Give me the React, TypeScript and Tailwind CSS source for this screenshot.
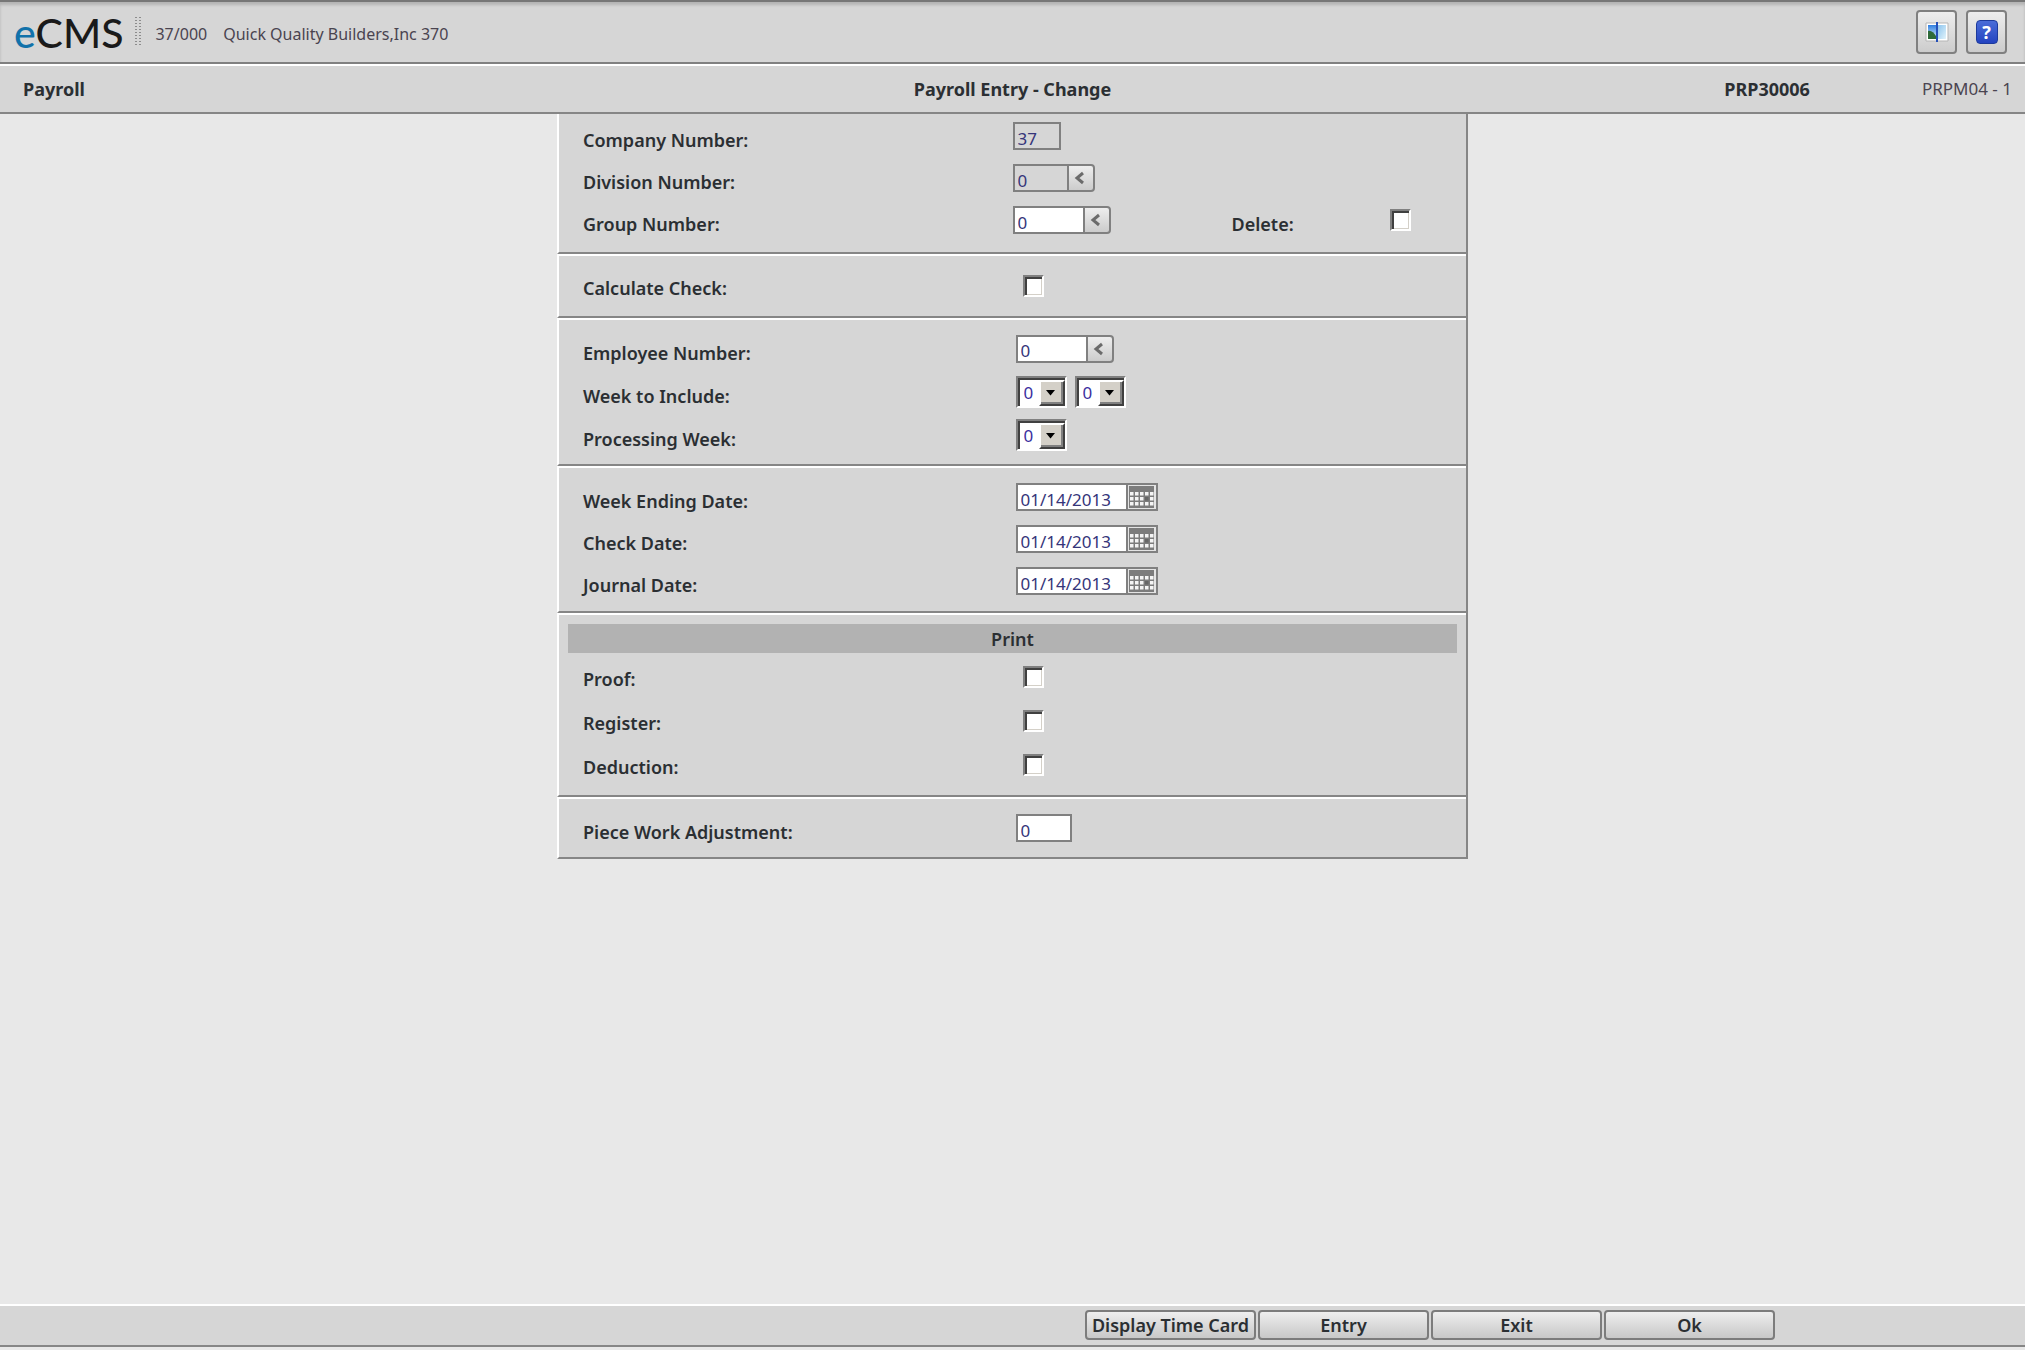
import type { InputHTMLAttributes, ReactNode } from "react";

type rowProps = {
    label: string;
    htmlFor: string;
    className?: string;
    labelClass?: string;
    children: ReactNode;
}

type fieldProps = InputHTMLAttributes<HTMLInputElement> & {
    id: string;
}

const sunken = "border-2 border-t-[#808080] border-l-[#808080] border-r-white border-b-white";

const Section = ({ className = "", children }: { className?: string, children: ReactNode }) => {
    return (
        <section className={`border-t-2 border-b-2 border-l-2 border-t-white border-b-[#868686] border-l-white ${className}`}>
            {children}
        </section>
    )
}

const Row = ({ label, htmlFor, className = "h-[42px]", labelClass = "pt-2", children }: rowProps) => {
    return (
        <div className={`grid grid-cols-2 items-center ${className}`}>
            <label htmlFor={htmlFor} className={`pl-6 font-semibold ${labelClass}`}>{label}</label>
            <div className="flex items-center">{children}</div>
        </div>
    )
}

const Field = ({ className = "", ...rest }: fieldProps) => {
    return (
        <input
            type="text"
            className={`h-7 border-2 border-[#808080] px-[3px] pt-1 text-[17px] text-[#35357a] outline-none ${className}`}
            {...rest}
        />
    )
}

const LookupButton = ({ label }: { label: string }) => {
    return (
        <button
            type="button"
            aria-label={label}
            className="-ml-[2px] flex h-7 w-7 items-center justify-center rounded-r border-2 border-[#808080] bg-linear-to-b from-[#eeeeee] to-[#cccccc] pr-[3px]"
        >
            <svg width="10" height="14" viewBox="0 0 10 14" fill="none" stroke="#6b6b6b" strokeWidth="3">
                <path d="M9 2 3 7l6 5" />
            </svg>
        </button>
    )
}

const CheckBox = ({ id, className = "ml-[10px]" }: { id: string, className?: string }) => {
    return (
        <input
            id={id}
            type="checkbox"
            className={`h-[22px] w-[21px] appearance-none bg-white shadow-[inset_2px_2px_0_#404040,inset_-1px_-1px_0_#d4d0c8] ${sunken} ${className}`}
        />
    )
}

const WeekSelect = ({ id, label }: { id: string, label?: string }) => {
    return (
        <div className={`relative h-8 w-[51px] bg-white ${sunken}`}>
            <select
                id={id}
                aria-label={label}
                className="h-7 w-[47px] appearance-none border-t-2 border-l-2 border-[#404040] pl-1 text-[17px] leading-6 text-[#3a2fa0] outline-none"
            >
                <option>0</option>
                <option>1</option>
                <option>2</option>
            </select>
            <span className="pointer-events-none absolute top-[2px] right-0 flex h-[26px] w-[26px] items-center justify-center border-2 border-t-white border-l-white border-r-[#404040] border-b-[#404040] bg-[#d4d0c8] pr-[2px] shadow-[inset_-2px_-2px_0_#808080]">
                <svg width="9" height="6" viewBox="0 0 9 6"><path d="M0 0h9L4.500 5.500z" fill="#000" /></svg>
            </span>
        </div>
    )
}

const DateField = ({ id, label }: { id: string, label: string }) => {
    return (
        <>
            <Field id={id} defaultValue="01/14/2013" className="ml-[3px] w-[112px] bg-white" />
            <button
                type="button"
                aria-label={label}
                className="-ml-[2px] flex h-7 w-8 items-center justify-center border-2 border-[#808080] bg-[#e4e4e4]"
            >
                <svg width="25" height="22" viewBox="0 0 25 22">
                    <path d="M0 0h25v22H0z" fill="#7c7c7c" />
                    {[6, 11, 16].map((y) => (
                        [1, 6, 11, 16, 21].map((x) => (
                            <rect key={`${x}-${y}`} x={x} y={y} width="3.500" height="3.500" fill={x === 16 && y === 11 ? "#666" : "#f4f4f4"} />
                        ))
                    ))}
                </svg>
            </button>
        </>
    )
}

const ToolButton = ({ label, children }: { label: string, children: ReactNode }) => {
    return (
        <button
            type="button"
            aria-label={label}
            className="flex h-11 w-[41px] items-center justify-center rounded border-2 border-[#808080] bg-linear-to-b from-[#eeeeee] to-[#cccccc]"
        >
            {children}
        </button>
    )
}

const FooterButton = ({ children }: { children: ReactNode }) => {
    return (
        <button
            type="button"
            className="h-[30px] w-[171px] rounded border-2 border-[#7c7c7c] bg-linear-to-b from-[#eeeeee] to-[#c8c8c8] font-semibold whitespace-nowrap"
        >
            {children}
        </button>
    )
}

const App = () => {

    return (
        <div className="flex min-h-screen flex-col bg-[#e8e8e8] font-['Noto_Sans',sans-serif] text-[18px] leading-6 text-[#2b2f33]">
            <header className="flex h-16 items-center border-t-2 border-b-2 border-t-[#777777] border-b-[#808080] bg-[#d6d6d6] pr-[18px] pl-[14px] shadow-[inset_0_3px_3px_#b4b4b4]">
                <span className="font-['Lato',sans-serif] text-[41px] leading-none font-medium text-[#1a1a1a]"><span className="text-[#1272aa]">e</span>CMS</span>
                <svg className="ml-3" width="6" height="30" viewBox="0 0 6 30" stroke="#8c8c8c" strokeWidth="2" strokeDasharray="1 2">
                    <path d="M1 0v30M5 0v30" />
                </svg>
                <div className="ml-[14px] flex gap-4 pt-1 text-[16px] text-[#4a4450]">
                    <span>37/000</span>
                    <span>Quick Quality Builders,Inc 370</span>
                </div>
                <div className="ml-auto flex gap-[9px]">
                    <ToolButton label="Switch view">
                        <svg width="24" height="22" viewBox="0 0 24 22">
                            <defs>
                                <linearGradient id="sky" x1="0" y1="0" x2="0" y2="1">
                                    <stop offset="0" stopColor="#2f7fe0" />
                                    <stop offset="1" stopColor="#e4f4ff" />
                                </linearGradient>
                                <linearGradient id="haze" x1="0" y1="0" x2="1" y2="1">
                                    <stop offset="0" stopColor="#8cc4ee" />
                                    <stop offset="1" stopColor="#e2f3fa" />
                                </linearGradient>
                            </defs>
                            <path d="M1 2h22v18H1z" fill="#fff" stroke="#b5b5b5" />
                            <path d="M3 4h8v14H3z" fill="url(#sky)" />
                            <path d="M3 10c3-1 6 2 8 5v3H3z" fill="#2f6b3a" />
                            <path d="M13 4h8v14h-8z" fill="url(#haze)" />
                            <path d="M11 1h2v20h-2z" fill="#2450b8" />
                        </svg>
                    </ToolButton>
                    <ToolButton label="Help">
                        <span className="flex h-6 w-[22px] items-center justify-center rounded border border-[#1d3a9c] bg-linear-to-b from-[#4a6cd8] to-[#2443c0] text-[18px] font-bold text-white">?</span>
                    </ToolButton>
                </div>
            </header>

            <div className="grid h-[50px] grid-cols-3 items-center border-t-2 border-b-2 border-t-white border-b-[#868686] bg-[#d6d6d6] px-[13px] font-bold">
                <h2 className="pl-[10px]">Payroll</h2>
                <h1 className="text-center">Payroll Entry - Change</h1>
                <div className="flex items-center justify-end">
                    <span className="mr-[112px]">PRP30006</span>
                    <span className="text-[17px] font-normal text-[#4a4450]">PRPM04 - 1</span>
                </div>
            </div>

            <main className="flex-1">
                <form className="mx-auto w-full max-w-[911px] border-r-2 border-r-[#868686] bg-[#d6d6d6]">
                    <section className="border-b-2 border-l-2 border-b-[#868686] border-l-white pt-px pb-[11px]">
                        <Row label="Company Number:" htmlFor="company">
                            <Field id="company" defaultValue="37" readOnly className="w-12 bg-[#d6d6d6]" />
                        </Row>
                        <Row label="Division Number:" htmlFor="division">
                            <Field id="division" defaultValue="0" readOnly className="w-14 bg-[#d6d6d6]" />
                            <LookupButton label="Look up division" />
                        </Row>
                        <Row label="Group Number:" htmlFor="group">
                            <Field id="group" defaultValue="0" className="w-[72px] bg-white" />
                            <LookupButton label="Look up group" />
                            <label htmlFor="delete" className="ml-[121px] w-[158px] pt-2 font-semibold">Delete:</label>
                            <CheckBox id="delete" className="" />
                        </Row>
                    </section>

                    <Section>
                        <Row label="Calculate Check:" htmlFor="calculate" className="h-[60px]" labelClass="pt-1">
                            <CheckBox id="calculate" />
                        </Row>
                    </Section>

                    <Section className="pt-[7px] pb-2">
                        <Row label="Employee Number:" htmlFor="employee" className="h-[43px]">
                            <Field id="employee" defaultValue="0" className="ml-[3px] w-[72px] bg-white" />
                            <LookupButton label="Look up employee" />
                        </Row>
                        <Row label="Week to Include:" htmlFor="week-from" className="h-[43px]">
                            <div className="ml-[3px] flex gap-2">
                                <WeekSelect id="week-from" />
                                <WeekSelect id="week-to" label="Second week to include" />
                            </div>
                        </Row>
                        <Row label="Processing Week:" htmlFor="processing" className="h-[43px]">
                            <div className="ml-[3px]">
                                <WeekSelect id="processing" />
                            </div>
                        </Row>
                    </Section>

                    <Section className="pt-2 pb-[9px]">
                        <Row label="Week Ending Date:" htmlFor="week-ending">
                            <DateField id="week-ending" label="Pick week ending date" />
                        </Row>
                        <Row label="Check Date:" htmlFor="check-date">
                            <DateField id="check-date" label="Pick check date" />
                        </Row>
                        <Row label="Journal Date:" htmlFor="journal-date">
                            <DateField id="journal-date" label="Pick journal date" />
                        </Row>
                    </Section>

                    <Section className="pt-[9px] pb-2">
                        <h3 className="mx-[9px] mb-[2px] h-[29px] bg-[#b2b2b2] pt-[3px] text-center font-semibold">Print</h3>
                        <Row label="Proof:" htmlFor="proof" className="h-11" labelClass="pt-1">
                            <CheckBox id="proof" />
                        </Row>
                        <Row label="Register:" htmlFor="register" className="h-11" labelClass="pt-1">
                            <CheckBox id="register" />
                        </Row>
                        <Row label="Deduction:" htmlFor="deduction" className="h-11" labelClass="pt-1">
                            <CheckBox id="deduction" />
                        </Row>
                    </Section>

                    <Section>
                        <Row label="Piece Work Adjustment:" htmlFor="piece-work" className="h-[58px]">
                            <Field id="piece-work" defaultValue="0" className="ml-[3px] w-14 bg-white" />
                        </Row>
                    </Section>
                </form>
            </main>

            <footer className="mb-[3px] flex h-[43px] justify-end gap-[2px] border-t-2 border-b-2 border-t-white border-b-[#868686] bg-[#d6d6d6] pt-1 pr-[250px]">
                <FooterButton>Display Time Card</FooterButton>
                <FooterButton>Entry</FooterButton>
                <FooterButton>Exit</FooterButton>
                <FooterButton>Ok</FooterButton>
            </footer>
        </div>
    )
}

export default App
